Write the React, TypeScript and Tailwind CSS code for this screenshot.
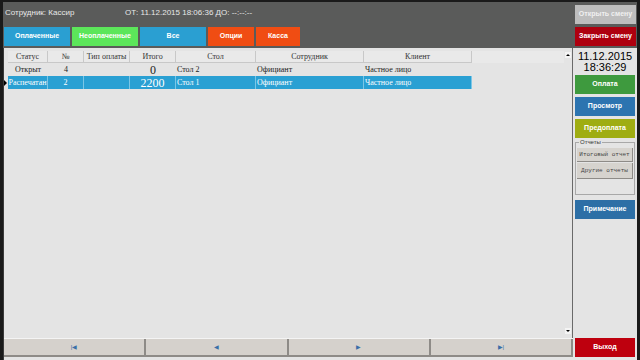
import React from "react";

const sans = { fontFamily: '"Liberation Sans", Arial, sans-serif' };
const serif = { fontFamily: '"Liberation Serif", serif' };
const mono = { fontFamily: '"Liberation Mono", monospace' };

type Row = { status: string; num: string; pay: string; total: string; table: string; staff: string; client: string; selected?: boolean };

const rows: Row[] = [
  { status: "Открыт", num: "4", pay: "", total: "0", table: "Стол 2", staff: "Официант", client: "Частное лицо" },
  { status: "Распечатан", num: "2", pay: "", total: "2200", table: "Стол 1", staff: "Официант", client: "Частное лицо", selected: true },
];

const cols = ["w-[40px]", "w-[36px]", "w-[46px]", "w-[46px]", "w-[80px]", "w-[108px]", "w-[108px]"];
const heads = ["Статус", "№", "Тип оплаты", "Итого", "Стол", "Сотрудник", "Клиент"];

function TopButton({ label, color, w }: { label: string; color: string; w: string }) {
  return (
    <div className={`${w} h-[19px] ${color} flex items-center justify-center text-[7px] font-bold text-white whitespace-nowrap`}>
      {label}
    </div>
  );
}

function SideButton({ label, color }: { label: string; color: string }) {
  return (
    <div className={`mx-[2px] h-[19px] ${color} flex items-center justify-center text-[7px] font-bold text-white whitespace-nowrap`}>
      {label}
    </div>
  );
}

function NavButton({ glyph }: { glyph: string }) {
  return (
    <div className="flex-1 h-full bg-[#d5d1cc] border-r-2 border-[#8e8b87] border-b-2 flex items-center justify-center text-[6px] text-[#3a6ea8]">
      {glyph}
    </div>
  );
}

export default function App() {
  return (
    <div className="w-[640px] h-[360px] bg-[#1a1a1a] pt-[2px] px-[3px] flex flex-col overflow-hidden" style={sans}>
      {/* Header */}
      <div className="h-[46px] bg-[#5a5b5a] flex shrink-0">
        <div className="flex-1 flex flex-col">
          <div className="h-[22px] flex items-center text-[8px] text-[#e8e8e8] pl-[2px]">
            <span className="w-[120px]">Сотрудник: Кассир</span>
            <span>ОТ: 11.12.2015 18:06:36 ДО: --:--:--</span>
          </div>
          <div className="flex gap-[2px] pl-[1px] pt-[3px]">
            <TopButton label="Оплаченные" color="bg-[#2a9fd2]" w="w-[66px]" />
            <TopButton label="Неоплаченные" color="bg-[#5ce65a]" w="w-[66px]" />
            <TopButton label="Все" color="bg-[#2a9fd2]" w="w-[66px]" />
            <TopButton label="Опции" color="bg-[#f04d13]" w="w-[46px]" />
            <TopButton label="Касса" color="bg-[#f04d13]" w="w-[44px]" />
          </div>
        </div>
        <div className="w-[61px] mr-[1px] flex flex-col gap-[3px] pt-[3px]">
          <div className="h-[19px] bg-[#bdbdbd] flex items-center justify-center text-[7px] font-bold text-[#f0f0f0] whitespace-nowrap">Открыть смену</div>
          <div className="h-[19px] bg-[#ae000f] flex items-center justify-center text-[7px] font-bold text-white whitespace-nowrap">Закрыть смену</div>
        </div>
      </div>

      {/* Body */}
      <div className="flex-1 flex bg-[#e4e4e4]">
        <div className="w-[570px] shrink-0 flex flex-col border-l border-[#3a3a3a]">
          <div className="flex-1 flex">
            <div className="flex-1 pt-[3px] pl-[4px]">
              <div className="flex h-[12px] bg-[#e9e9e9]" style={serif}>
                {heads.map((h, i) => (
                  <div key={h} className={`${cols[i]} border-r border-b border-[#c8c8c8] flex items-center justify-center text-[8px] text-[#333] whitespace-nowrap`}>
                    {h}
                  </div>
                ))}
              </div>
              {rows.map((r) => (
                <div key={r.num} className="relative flex h-[13px]" style={serif}>
                  {r.selected && (
                    <span className="absolute left-[-4px] top-[4px] w-0 h-0 border-y-[3px] border-y-transparent border-l-[3px] border-l-black" />
                  )}
                  {[r.status, r.num, r.pay, r.total, r.table, r.staff, r.client].map((c, i) => (
                    <div
                      key={i}
                      className={`${cols[i]} flex items-center overflow-hidden whitespace-nowrap leading-none ${
                        r.selected ? "bg-[#2aa0d3] text-white border-r border-[#7cc6e6]" : "text-[#222]"
                      } ${i < 4 ? "justify-center" : "pl-[1px]"} ${i === 3 ? "text-[12px]" : "text-[8px]"}`}
                    >
                      {c}
                    </div>
                  ))}
                </div>
              ))}
            </div>
            {/* scrollbar */}
            <div className="w-[9px] border-r border-[#6a6a6a] flex flex-col justify-between py-[4px] items-center">
              <div className="w-[6px] h-[6px] bg-[#f4f4f4] flex items-center justify-center">
                <span className="w-0 h-0 border-x-[2px] border-x-transparent border-b-[2px] border-b-black" />
              </div>
              <div className="w-[6px] h-[6px] bg-[#f4f4f4] flex items-center justify-center">
                <span className="w-0 h-0 border-x-[2px] border-x-transparent border-t-[2px] border-t-black" />
              </div>
            </div>
          </div>
          <div className="h-[19px] flex border-t border-[#f4f4f4] mb-[3px]">
            <NavButton glyph="|◀" />
            <NavButton glyph="◀" />
            <NavButton glyph="▶" />
            <NavButton glyph="▶|" />
          </div>
        </div>

        {/* Right panel */}
        <div className="flex-1 min-w-0 flex flex-col pt-[3px]">
          <div className="text-center text-[11px] leading-[11px] text-black">11.12.2015</div>
          <div className="text-center text-[11px] leading-[11px] text-black mb-[2px]">18:36:29</div>
          <div className="flex flex-col gap-[3px]">
            <SideButton label="Оплата" color="bg-[#3e9a3e]" />
            <SideButton label="Просмотр" color="bg-[#2c74b0]" />
            <SideButton label="Предоплата" color="bg-[#9fad12]" />
          </div>
          <div className="relative mx-[2px] mt-[4px] h-[53px] border border-[#a8a8a8] pt-[5px] px-[1px]">
            <span className="absolute left-[3px] top-[-5px] bg-[#e4e4e4] text-[6px] leading-[8px] text-[#333] px-[1px]">Отчеты</span>
            <div className="h-[14px] bg-[#d6d3ce] border-r border-b border-[#8e8b87] flex items-center justify-center text-[6px] text-[#444] whitespace-nowrap" style={mono}>
              Итоговый отчет
            </div>
            <div className="mt-[1px] h-[16px] bg-[#d6d3ce] border-r border-b border-[#8e8b87] flex items-center justify-center text-[6px] text-[#444] whitespace-nowrap" style={mono}>
              Другие отчеты
            </div>
          </div>
          <div className="mt-[5px]">
            <SideButton label="Примечание" color="bg-[#2d6fa6]" />
          </div>
          <div className="flex-1" />
          <div className="mb-[3px]">
            <SideButton label="Выход" color="bg-[#be000e]" />
          </div>
        </div>
      </div>
    </div>
  );
}
